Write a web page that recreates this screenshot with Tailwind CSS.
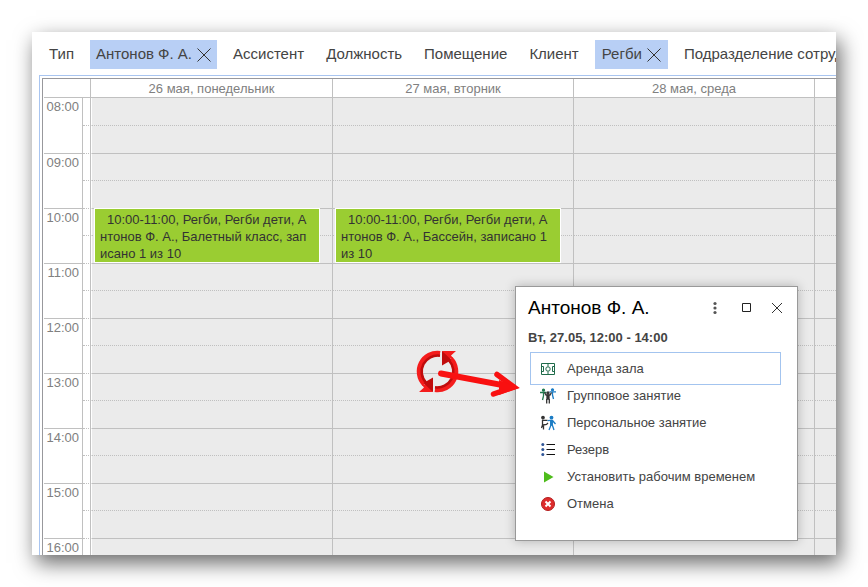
<!DOCTYPE html>
<html lang="ru">
<head>
    <meta charset="UTF-8">
    <meta name="viewport" content="width=device-width, initial-scale=1.0">
    <title>Расписание</title>
    <script src="https://cdn.jsdelivr.net/npm/@tailwindcss/browser@4"></script>
</head>
<body class="h-screen overflow-hidden bg-white p-8 font-['Liberation_Sans',Arial,sans-serif] text-[#444]">
    <div class="relative flex h-full flex-col overflow-hidden bg-white shadow-[4px_8px_20px_rgba(0,0,0,0.6)]">

        <!-- filters -->
        <nav class="flex shrink-0 gap-[10px] pt-2 pb-[6px] pl-[11px] text-[15px] whitespace-nowrap">
            <button class="h-[29px] shrink-0 px-[6px]">Тип</button>
            <button class="flex h-[29px] shrink-0 items-center gap-[5px] bg-[#b8cff5] px-[6px]">
                Антонов Ф. А.
                <svg class="size-[14px]" viewBox="0 0 14 14" fill="none" stroke="#333"><path d="M.5.5l13 13M13.5.5l-13 13"/></svg>
            </button>
            <button class="h-[29px] shrink-0 px-[6px]">Ассистент</button>
            <button class="h-[29px] shrink-0 px-[6px]">Должность</button>
            <button class="h-[29px] shrink-0 px-[6px]">Помещение</button>
            <button class="h-[29px] shrink-0 px-[6px]">Клиент</button>
            <button class="flex h-[29px] shrink-0 items-center gap-[5px] bg-[#b8cff5] px-[7px]">
                Регби
                <svg class="size-[14px]" viewBox="0 0 14 14" fill="none" stroke="#333"><path d="M.5.5l13 13M13.5.5l-13 13"/></svg>
            </button>
            <button class="h-[29px] shrink-0 px-[6px]">Подразделение сотрудника</button>
        </nav>

        <!-- calendar -->
        <div class="ml-[7px] min-h-0 flex-1 overflow-hidden border-t border-l border-[#a9c5f0] pt-[2px] pl-[2px]">
            <div class="border-t border-l border-[#98989c] pl-px">
                <table class="w-full table-fixed border-separate border-spacing-0 text-[13px] text-[#808080]">
                    <colgroup>
                        <col class="w-[39px]">
                        <col class="w-2">
                        <col class="w-[242px]">
                        <col class="w-[241px]">
                        <col class="w-[241px]">
                        <col>
                    </colgroup>
                    <thead>
                        <tr class="h-[19px] leading-[17px]">
                            <th colspan="2" class="border-r border-b border-[#c0c0c0] p-0"></th>
                            <th class="border-r border-b border-[#c0c0c0] p-0 pt-px font-normal">26 мая, понедельник</th>
                            <th class="border-r border-b border-[#c0c0c0] p-0 pt-px font-normal">27 мая, вторник</th>
                            <th class="border-r border-b border-[#c0c0c0] p-0 pt-px font-normal">28 мая, среда</th>
                            <th class="border-b border-[#c0c0c0] p-0"></th>
                        </tr>
                    </thead>
                    <tbody id="hours"></tbody>
                </table>
            </div>
        </div>

        <!-- popup -->
        <div class="absolute top-[254px] left-[483px] w-[283px] border border-[#999] bg-white pb-[23px] shadow-[0_0_10px_rgba(0,0,0,0.25)]">
            <div class="flex h-[42px] items-center pr-[13px] pl-3">
                <h2 class="flex-1 text-[19px] text-black">Антонов Ф. А.</h2>
                <div class="flex items-center gap-[17px]">
                    <button aria-label="Меню"><svg class="size-[14px]" viewBox="0 0 14 14" fill="#555"><circle cx="7" cy="2.5" r="1.6"/><circle cx="7" cy="7" r="1.6"/><circle cx="7" cy="11.5" r="1.6"/></svg></button>
                    <button aria-label="Развернуть"><svg class="size-[14px]" viewBox="0 0 14 14" fill="none" stroke="#222"><path d="M3.5 2.5h8v8h-8z"/></svg></button>
                    <button aria-label="Закрыть"><svg class="size-[14px]" viewBox="0 0 14 14" fill="none" stroke="#333"><path d="M2 2l10 10M12 2L2 12"/></svg></button>
                </div>
            </div>
            <p class="pl-3 text-[13px] leading-[18px] font-bold">Вт, 27.05, 12:00 - 14:00</p>
            <div class="flex flex-col pt-2 pr-4 pl-[14px] text-[13px]">
                <button class="-my-[3px] flex h-[33px] items-center gap-3 border border-[#a3c4ef] pl-[10px]">
                    <svg class="size-[14px]" viewBox="0 0 14 14" fill="none" stroke="#1f6b4a"><path d="M.5 1.5h13v11H.5zM7 1.5v3M7 9.5v3M.5 4.5h2v5h-2M13.5 4.5h-2v5h2"/><circle cx="7" cy="7" r="2.2"/></svg>
                    Аренда зала
                </button>
                <button class="flex h-[27px] items-center gap-[11px] pl-[10px]">
                    <svg class="size-4" viewBox="0 0 16 16" fill="none" stroke-width="1.3"><g stroke="#217a50" fill="#217a50"><circle cx="3.5" cy="2.2" r="1"/><path d="M0 4.5h6.5M3.5 4v4M2.5 12l1-4"/></g><g stroke="#1b7cc4" fill="#1b7cc4"><circle cx="12.5" cy="1.8" r="1"/><path d="M9.5 3.8H16M12.5 3.5v4M13.5 11l-1-4"/></g><g stroke="#333"><circle cx="8" cy="5" r="1" fill="#333"/><path d="M4.5 4.5l1.500 2.500h4L11.500 4.500"/><path d="M7 7.500h2V11H7z" fill="#333"/><path d="M6.700 11v4.500M9.300 11v4.500"/></g></svg>
                    Групповое занятие
                </button>
                <button class="flex h-[27px] items-center gap-[11px] pl-[10px]">
                    <svg class="size-4" viewBox="0 0 16 16" fill="none" stroke-width="1.3"><g stroke="#333"><circle cx="3" cy="2.6" r="1.2" fill="#333"/><path d="M2.500 5v5M2 5.300h5.500M3 10l3.500-.5 1.500-1.500M2.500 10l-1 3M3.500 10v4.500"/></g><g stroke="#1b7cc4"><circle cx="11.500" cy="2.600" r="1.300" fill="#1b7cc4"/><path d="M10.700 5.300h1.600V10h-1.600z" fill="#1b7cc4"/><path d="M7.500 5.700l3-.4M12.500 5.500L15.500 9M11 10l-2 5M12.300 10l1.700 5"/></g></svg>
                    Персональное занятие
                </button>
                <button class="flex h-[27px] items-center gap-3 pl-[11px]">
                    <svg class="size-[14px]" viewBox="0 0 14 14"><g fill="#2f5597"><circle cx="1.800" cy="1.500" r="1.500"/><circle cx="1.800" cy="6.500" r="1.500"/><circle cx="1.800" cy="11.500" r="1.500"/></g><path d="M5.500 1.500H14M5.500 6.500H14M5.500 11.500H14" stroke="#111"/></svg>
                    Резерв
                </button>
                <button class="flex h-[27px] items-center gap-3 pl-[11px]">
                    <svg class="size-[14px]" viewBox="0 0 14 14" fill="#4ebc1b"><path d="M3 1.500l9.500 5.500L3 12.500z"/></svg>
                    Установить рабочим временем
                </button>
                <button class="flex h-[27px] items-center gap-3 pl-[11px]">
                    <svg class="size-[14px]" viewBox="0 0 14 14"><circle cx="7" cy="7" r="6.500" fill="#dd2c2c" stroke="#b31d1d"/><path d="M4.500 4.500l5 5M9.500 4.500l-5 5" stroke="#fff" stroke-width="2"/></svg>
                    Отмена
                </button>
            </div>
        </div>

        <!-- cursor and arrow -->
        <svg class="pointer-events-none absolute top-[317px] left-[383px] h-[56px] w-[140px]" viewBox="0 0 140 56">
            <g id="half">
                <path d="M25 4.700A18 18 0 0 0 9.500 35" fill="none" stroke="#f41c1c" stroke-width="5.500"/>
                <path d="M25 6.700A16 16 0 0 0 11 33.500" fill="none" stroke="#c00c0c" stroke-width="2.500"/>
                <path d="M18 43H4l5-4.500L7 36l7-2z" fill="#f41c1c"/>
                <path d="M18 28.500V43L8.500 34z" fill="#c00c0c"/>
            </g>
            <use href="#half" transform="rotate(180 22.500 22.500)"/>
            <path d="M26 24.500l72 13.500" stroke="#f91010" stroke-width="6" stroke-linecap="round"/>
            <path d="M82 25.500L99 38 78.500 45" fill="none" stroke="#f91010" stroke-width="5.500" stroke-linecap="round"/>
            <path d="M84 31l19.500 8L84 46z" fill="#f91010"/>
        </svg>
    </div>

    <script>
        const events = {
            10: [
                '10:00-11:00, Регби, Регби дети, Антонов Ф. А., Балетный класс, записано 1 из 10',
                '10:00-11:00, Регби, Регби дети, Антонов Ф. А., Бассейн, записано 1 из 10'
            ]
        }

        // the first day keeps a white line next to the gutter, the last one runs off the edge
        const dayBorders = ['border-r border-l border-l-white', 'border-r', 'border-r', '']

        function eventBox(text) {
            return `<div class="absolute -top-px right-3 left-[2px] z-10 h-[55px] overflow-hidden border border-white bg-[#9acd32] pt-[2px] pr-2 pl-[5px] indent-[7px] leading-[17px] break-all text-[#333]">${text}</div>`
        }

        let rows = ''
        for (let h = 8; h <= 16; h++) {
            const height = h === 8 ? 'h-[28px]' : 'h-[27px]'
            rows += `<tr class="${height}">
                <th rowspan="2" class="border-r border-b border-[#c0c0c0] p-0 pr-[3px] text-right align-top leading-[17px] font-normal">${String(h).padStart(2, '0')}:00</th>
                <td class="border-r border-b border-[#c0c0c0] p-0 [border-bottom-style:dotted]"></td>`
            for (let d = 0; d < 4; d++) {
                const text = events[h] && events[h][d]
                rows += `<td class="relative border-b border-[#c0c0c0] bg-[#ebebeb] p-0 [border-bottom-style:dotted] ${dayBorders[d]}">${text ? eventBox(text) : ''}</td>`
            }
            rows += `</tr><tr class="h-[28px]"><td class="border-r border-b border-[#c0c0c0] p-0 [border-bottom-style:dotted]"></td>`
            for (let d = 0; d < 4; d++) {
                rows += `<td class="border-b border-[#c0c0c0] bg-[#ebebeb] p-0 ${dayBorders[d]}"></td>`
            }
            rows += '</tr>'
        }
        document.getElementById('hours').innerHTML = rows
    </script>
</body>
</html>
